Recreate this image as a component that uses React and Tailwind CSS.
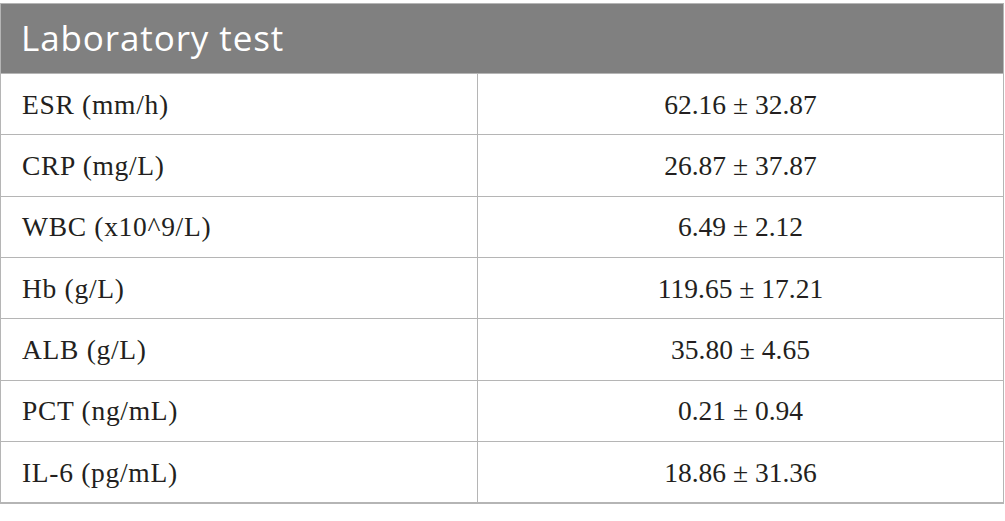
import React from "react";

const rows = [
  ["ESR (mm/h)", "62.16 ± 32.87"],
  ["CRP (mg/L)", "26.87 ± 37.87"],
  ["WBC (x10^9/L)", "6.49 ± 2.12"],
  ["Hb (g/L)", "119.65 ± 17.21"],
  ["ALB (g/L)", "35.80 ± 4.65"],
  ["PCT (ng/mL)", "0.21 ± 0.94"],
  ["IL-6 (pg/mL)", "18.86 ± 31.36"],
];

export default function App() {
  return (
    <div className="w-[1005px] h-[521px] bg-white pt-[3px]">
      <div className="w-[1004px] border-x border-t border-b-2 border-[#b5b5b5]">
        {/* Header */}
        <div className="h-[69px] bg-[#808080] flex items-center pl-[20px]">
          <span className="text-white text-[35px] font-['Open_Sans',sans-serif] tracking-[0.9px]">
            Laboratory test
          </span>
        </div>

        {/* Body */}
        {rows.map(([label, value]) => (
          <div
            key={label}
            className="grid grid-cols-[477px_1fr] h-[61.33px] border-t border-[#b5b5b5] font-['Liberation_Serif',serif] text-[27.5px] text-[#231f20]"
          >
            <div className="flex items-center pl-[21px] border-r border-[#b5b5b5] tracking-[0.7px]">
              {label}
            </div>
            <div className="flex items-center justify-center">
              {value}
            </div>
          </div>
        ))}
      </div>
    </div>
  );
}
